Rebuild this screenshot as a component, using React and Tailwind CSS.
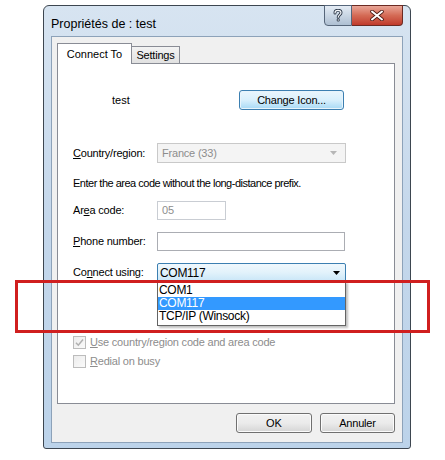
import React from "react";

const font = { fontFamily: '"Liberation Sans", Arial, sans-serif' };

function U({ children }) {
  return <span className="underline underline-offset-[1px] decoration-[1px]">{children}</span>;
}

function Arrow({ color = "#000" }) {
  return (
    <svg width="7" height="4" viewBox="0 0 7 4">
      <path d="M0 0h7L3.5 4z" fill={color} />
    </svg>
  );
}

function Checkbox({ checked, label }) {
  return (
    <div className="flex h-[13px] items-center gap-[4px]">
      <div className="flex h-[13px] w-[13px] items-center justify-center border border-[#bcbcbc] bg-gradient-to-br from-[#ececec] to-[#fafafa]">
        {checked && (
          <svg width="9" height="9" viewBox="0 0 9 9">
            <path d="M1 4.8l2.3 2.4L8 1.5" fill="none" stroke="#b0b0b0" strokeWidth="1.5" />
          </svg>
        )}
      </div>
      <span className="text-[11px] tracking-[-0.2px] text-[#8d8d8d]">{label}</span>
    </div>
  );
}

function Row({ label, className = "", children }) {
  return (
    <div className={`flex items-center ${className}`}>
      <div className="w-[84px] shrink-0 text-[11px] tracking-[-0.2px] text-black">{label}</div>
      {children}
    </div>
  );
}

export default function App() {
  return (
    <div className="relative h-[460px] w-[445px] bg-white" style={font}>
      {/* window */}
      <div className="ml-[43px] pt-[5px]">
        <div className="flex h-[444px] w-[368px] flex-col rounded-t-[6px] rounded-b-[3px] border border-[#3d4650] bg-gradient-to-b from-[#d7e4f1] via-[#c4d7eb] to-[#bcd3ea] px-[7px] pb-[5px]">
          <div className="flex h-[30px] shrink-0 items-start">
            <div className="mt-[9px] flex-1 text-[12.5px] text-black">Propriétés de : test</div>
            <div className="relative z-10 -mt-px flex">
              <div className="flex h-[21px] w-[28px] items-center justify-center rounded-bl-[4px] border border-[#56667a] bg-gradient-to-b from-[#e4ecf5] via-[#c9d6e4] to-[#aebfd2]">
                <svg width="10" height="13" viewBox="0 0 10 13">
                  <path d="M2 4C2 2.2 3.3 1.3 5 1.3S8 2.3 8 3.8c0 2-2.8 2.2-2.8 4.4" fill="none" stroke="#2e3a4a" strokeWidth="3" strokeLinecap="round" />
                  <path d="M2 4C2 2.2 3.3 1.3 5 1.3S8 2.3 8 3.8c0 2-2.8 2.2-2.8 4.4" fill="none" stroke="#f6f8fb" strokeWidth="1.2" strokeLinecap="round" />
                  <circle cx="5.2" cy="11" r="1.6" fill="#2e3a4a" />
                  <circle cx="5.2" cy="11" r="0.7" fill="#f6f8fb" />
                </svg>
              </div>
              <div className="flex h-[21px] w-[51px] items-center justify-center rounded-br-[4px] border border-l-0 border-[#6b2a22] bg-gradient-to-b from-[#e8a597] via-[#d46a55] to-[#c0392b]">
                <svg width="14" height="11" viewBox="0 0 14 11">
                  <path d="M2 1.5l10 8M12 1.5l-10 8" stroke="#4a1a14" strokeWidth="3.6" strokeLinecap="round" />
                  <path d="M2 1.5l10 8M12 1.5l-10 8" stroke="#ffffff" strokeWidth="2" strokeLinecap="round" />
                </svg>
              </div>
            </div>
          </div>

          {/* client area */}
          <div className="flex flex-1 flex-col border border-[#8da2b9] bg-[#f0f0f0] pl-[5px] pr-[8px] pt-[6px]">
            {/* tabs */}
            <div className="relative z-10 flex items-end">
              <div className="-mb-px flex h-[21px] w-[75px] items-center justify-center border border-b-0 border-[#898c95] bg-white text-[11px] text-black">
                Connect To
              </div>
              <div className="flex h-[17px] w-[48px] items-center justify-center border border-l-0 border-b-0 border-[#898c95] bg-gradient-to-b from-[#f3f3f3] to-[#e1e1e1] text-[11px] tracking-[-0.2px] text-black">
                Settings
              </div>
            </div>

            {/* panel */}
            <div className="relative flex h-[341px] w-[338px] flex-col border border-[#898c95] bg-white pl-[15px]">
              <div className="mt-[26px] flex h-[20px] items-center">
                <span className="ml-[39px] w-[127px] text-[11px] text-black">test</span>
                <div className="flex h-[20px] w-[105px] items-center justify-center rounded-[3px] border border-[#3c7fb1] bg-gradient-to-b from-[#eaf6fd] via-[#d9f0fc] to-[#a7d9f5] text-[11px] tracking-[-0.2px] text-black shadow-[inset_0_0_0_1px_#e8f4fb]">
                  Change Icon...
                </div>
              </div>

              <Row label={<><U>C</U>ountry/region:</>} className="mt-[33px]">
                <div className="flex h-[20px] w-[189px] items-center justify-between border border-[#c9c9c9] bg-[#f4f4f4] pl-[4px] pr-[8px]">
                  <span className="text-[11px] tracking-[-0.2px] text-[#8d8d8d]">France (33)</span>
                  <Arrow color="#b6b6b6" />
                </div>
              </Row>

              <div className="mt-[13px] text-[11px] leading-[14px] tracking-[-0.5px] text-black">
                Enter the area code without the long-distance prefix.
              </div>

              <Row label={<>Ar<U>e</U>a code:</>} className="mt-[11px]">
                <div className="flex h-[19px] w-[69px] items-center border border-[#c9cdd3] bg-white pl-[4px] text-[11px] text-[#8d8d8d]">
                  05
                </div>
              </Row>

              <Row label={<><U>P</U>hone number:</>} className="mt-[12px]">
                <div className="h-[19px] w-[188px] border border-[#abadb3] bg-white" />
              </Row>

              <Row label={<>Co<U>n</U>nect using:</>} className="mt-[12px]">
                <div className="relative">
                  <div className="flex h-[19px] w-[189px] items-center justify-between rounded-[2px] border border-[#3c7fb1] bg-gradient-to-b from-[#f0f8fd] via-[#e2f2fb] to-[#c9e6f7] pl-[2px] pr-[5px]">
                    <span className="text-[12px] tracking-[-0.3px] text-black">COM117</span>
                    <Arrow />
                  </div>
                  <div className="absolute left-0 top-[18px] z-20 w-[189px] border border-[#646464] bg-white py-[2px] text-[12px] leading-[13px] tracking-[-0.3px] shadow-[2px_2px_2px_rgba(0,0,0,0.25)]">
                    <div className="pl-[1px] text-black">COM1</div>
                    <div className="bg-[#3399ff] pl-[1px] text-white">COM117</div>
                    <div className="pl-[1px] text-black">TCP/IP (Winsock)</div>
                  </div>
                </div>
              </Row>

              <div className="mt-[54px] flex flex-col gap-[6px]">
                <Checkbox checked label={<><U>U</U>se country/region code and area code</>} />
                <Checkbox label={<><U>R</U>edial on busy</>} />
              </div>
            </div>

            {/* buttons */}
            <div className="mt-[9px] flex w-[338px] justify-end gap-[8px]">
              <div className="flex h-[20px] w-[76px] items-center justify-center rounded-[3px] border border-[#707070] bg-gradient-to-b from-[#f2f2f2] via-[#ebebeb] to-[#d5d5d5] text-[11px] text-black shadow-[inset_0_0_0_1px_#fbfbfb]">
                OK
              </div>
              <div className="flex h-[20px] w-[75px] items-center justify-center rounded-[3px] border border-[#707070] bg-gradient-to-b from-[#f2f2f2] via-[#ebebeb] to-[#d5d5d5] text-[11px] tracking-[-0.2px] text-black shadow-[inset_0_0_0_1px_#fbfbfb]">
                Annuler
              </div>
            </div>
          </div>
        </div>
      </div>

      {/* red highlight */}
      <div className="absolute left-[15px] top-[280px] z-30 h-[53px] w-[415px] border-[3px] border-[#d01f1f]" />
    </div>
  );
}
